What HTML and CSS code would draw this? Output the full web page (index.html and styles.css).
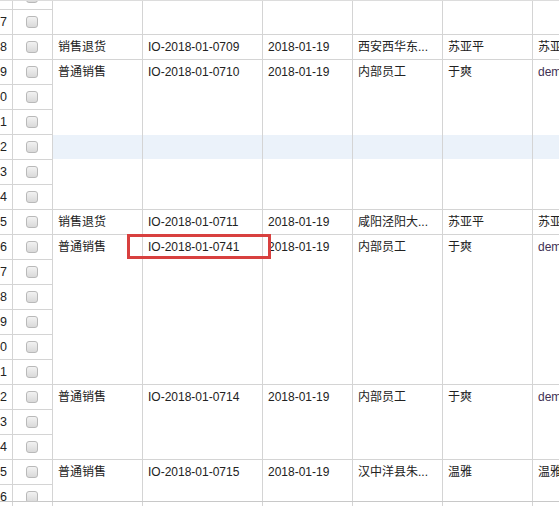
FILE: index.html
```html
<!DOCTYPE html>
<html lang="zh-CN">
<head>
<meta charset="utf-8">
<title>出入库单</title>
<link rel="stylesheet" href="styles.css">
</head>
<body>
<div class="sheet">
  <div class="viewport">
    <div class="grid">
      <div class="rn">16</div><div class="cb"><span class="box"></span></div>
      <div class="c span2"></div><div class="c span2"></div><div class="c span2"></div><div class="c span2"></div><div class="c span2"></div><div class="c span2"></div>

      <div class="rn">17</div><div class="cb"><span class="box"></span></div>

      <div class="rn">18</div><div class="cb"><span class="box"></span></div>
      <div class="c">销售退货</div><div class="c">IO-2018-01-0709</div><div class="c">2018-01-19</div><div class="c">西安西华东...</div><div class="c">苏亚平</div><div class="c">苏亚平</div>

      <div class="rn">19</div><div class="cb"><span class="box"></span></div>
      <div class="c span6 hl">普通销售</div><div class="c span6 hl">IO-2018-01-0710</div><div class="c span6 hl">2018-01-19</div><div class="c span6 hl">内部员工</div><div class="c span6 hl">于爽</div><div class="c span6 hl link">demo</div>

      <div class="rn">20</div><div class="cb"><span class="box"></span></div>
      <div class="rn">21</div><div class="cb"><span class="box"></span></div>
      <div class="rn">22</div><div class="cb"><span class="box"></span></div>
      <div class="rn">23</div><div class="cb"><span class="box"></span></div>
      <div class="rn">24</div><div class="cb"><span class="box"></span></div>

      <div class="rn">25</div><div class="cb"><span class="box"></span></div>
      <div class="c">销售退货</div><div class="c">IO-2018-01-0711</div><div class="c">2018-01-19</div><div class="c">咸阳泾阳大...</div><div class="c">苏亚平</div><div class="c">苏亚平</div>

      <div class="rn">26</div><div class="cb"><span class="box"></span></div>
      <div class="c span6">普通销售</div><div class="c span6">IO-2018-01-0741</div><div class="c span6">2018-01-19</div><div class="c span6">内部员工</div><div class="c span6">于爽</div><div class="c span6 link">demo</div>

      <div class="rn">27</div><div class="cb"><span class="box"></span></div>
      <div class="rn">28</div><div class="cb"><span class="box"></span></div>
      <div class="rn">29</div><div class="cb"><span class="box"></span></div>
      <div class="rn">30</div><div class="cb"><span class="box"></span></div>
      <div class="rn">31</div><div class="cb"><span class="box"></span></div>

      <div class="rn">32</div><div class="cb"><span class="box"></span></div>
      <div class="c span3">普通销售</div><div class="c span3">IO-2018-01-0714</div><div class="c span3">2018-01-19</div><div class="c span3">内部员工</div><div class="c span3">于爽</div><div class="c span3 link">demo</div>

      <div class="rn">33</div><div class="cb"><span class="box"></span></div>
      <div class="rn">34</div><div class="cb"><span class="box"></span></div>

      <div class="rn">35</div><div class="cb"><span class="box"></span></div>
      <div class="c span2">普通销售</div><div class="c span2">IO-2018-01-0715</div><div class="c span2">2018-01-19</div><div class="c span2">汉中洋县朱...</div><div class="c span2">温雅</div><div class="c span2">温雅</div>

      <div class="rn">36</div><div class="cb"><span class="box"></span></div>
    </div>
  </div>
  <div class="footer">
    <div class="f"></div><div class="f"></div><div class="f"></div><div class="f"></div><div class="f"></div><div class="f"></div><div class="f"></div><div class="f"></div>
  </div>
  <div class="mark"></div>
</div>
</body>
</html>
```

FILE: styles.css
```css
* { box-sizing: border-box; }

html, body {
  margin: 0;
  padding: 0;
  background: #ffffff;
}

body {
  font-family: "Liberation Sans", "Noto Sans CJK SC", sans-serif;
  font-size: 12px;
  color: #222222;
}

.sheet {
  position: relative;
  width: 559px;
  height: 506px;
  overflow: hidden;
}

.viewport {
  height: 501px;
  border-top: 1px solid #dcdcdc;
  overflow: hidden;
}

.grid {
  display: grid;
  width: 640px;
  grid-template-columns: 30px 40px 90px 120px 90px 90px 90px 90px;
  grid-auto-rows: 25px;
  margin-top: -16px;
  margin-left: -17px;
}

.grid > div {
  border-right: 1px solid #d4d4d4;
  border-bottom: 1px solid #d4d4d4;
  overflow: hidden;
  white-space: nowrap;
}

.rn {
  text-align: right;
  padding-right: 5px;
  line-height: 24px;
  font-size: 12.5px;
  color: #222222;
}

.cb {
  display: flex;
  align-items: center;
  justify-content: center;
  padding-right: 1px;
}

.box {
  display: block;
  width: 12px;
  height: 12px;
  border: 1px solid #b9b9b9;
  border-radius: 3px;
  background: linear-gradient(#f2f2f2, #d9d9d9);
}

.c {
  padding: 0 5px;
  line-height: 24px;
}

.span2 { grid-row: span 2; }
.span3 { grid-row: span 3; }
.span6 { grid-row: span 6; }

.hl {
  background: linear-gradient(to bottom,
    transparent 75px, #ebf2fa 75px, #ebf2fa 99px, transparent 99px);
}

.link { color: #3f3154; }

.footer {
  display: grid;
  width: 640px;
  grid-template-columns: 30px 40px 90px 120px 90px 90px 90px 90px;
  height: 5px;
  margin-left: -17px;
  border-top: 1px solid #c8c8c8;
}

.f {
  border-right: 1px solid #d4d4d4;
}

.mark {
  position: absolute;
  left: 127px;
  top: 234px;
  width: 144px;
  height: 25px;
  border: 3px solid #d8403f;
}
```
